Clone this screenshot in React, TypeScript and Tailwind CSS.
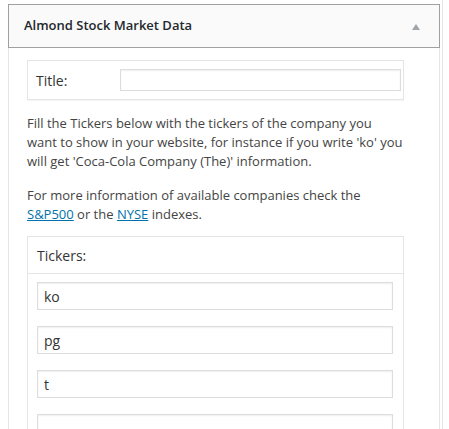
export default function App() {
  const tickers = ['ko', 'pg', 't', ''];
  return (
    <div className="w-[449px] h-[429px] overflow-hidden bg-white font-['Open_Sans',sans-serif]">
      <div className="w-[443px] h-full border-r border-[#e5e5e5] pl-2 pt-1">
        <div className="w-[432px]">
          <div className="h-[44px] border border-[#a0a0a0] bg-[#fafafa] flex items-center justify-between pl-[15px] pr-[19px]">
            <h3 className="text-[13px] font-semibold text-[#23282d]">Almond Stock Market Data</h3>
            <svg width="8" height="6" viewBox="0 0 8 6" className="mt-[1px]">
              <path d="M4 0 L8 6 L0 6 Z" fill="#a0a5aa" />
            </svg>
          </div>
          <div className="border-x border-[#e5e5e5] pl-[18px] pr-[35px] pt-3 pb-4 h-[400px]">
            <div className="h-[40px] border border-[#e5e5e5] shadow-[0_1px_1px_rgba(0,0,0,0.04)] bg-white flex items-center pl-2 pr-[2px]">
              <label className="w-[84px] text-[14px] text-[#333]">Title:</label>
              <input className="flex-1 h-[22px] border border-[#ddd] shadow-[inset_0_1px_2px_rgba(0,0,0,0.07)] outline-none" />
            </div>
            <p className="mt-[14px] text-[13px] leading-[19px] text-[#444]">
              Fill the Tickers below with the tickers of the company you want to show in your website, for instance if you write 'ko' you will get 'Coca-Cola Company (The)' information.
            </p>
            <p className="mt-[15px] text-[13px] leading-[19px] text-[#444]">
              For more information of available companies check the{' '}
              <a href="#" className="text-[#0073aa] underline">S&amp;P500</a> or the{' '}
              <a href="#" className="text-[#0073aa] underline">NYSE</a> indexes.
            </p>
            <div className="mt-[12px] border border-[#e5e5e5] bg-white">
              <div className="h-[37px] border-b border-[#e5e5e5] flex items-center pl-[9px] text-[14px] text-[#333]">
                Tickers:
              </div>
              <div className="pt-2 pl-[9px] pr-[10px] flex flex-col gap-4">
                {tickers.map((t, i) => (
                  <input
                    key={i}
                    defaultValue={t}
                    className="h-[28px] w-full border border-[#ddd] shadow-[inset_0_1px_2px_rgba(0,0,0,0.07)] px-[6px] text-[14px] text-[#333] outline-none"
                  />
                ))}
              </div>
            </div>
          </div>
        </div>
      </div>
    </div>
  );
}
